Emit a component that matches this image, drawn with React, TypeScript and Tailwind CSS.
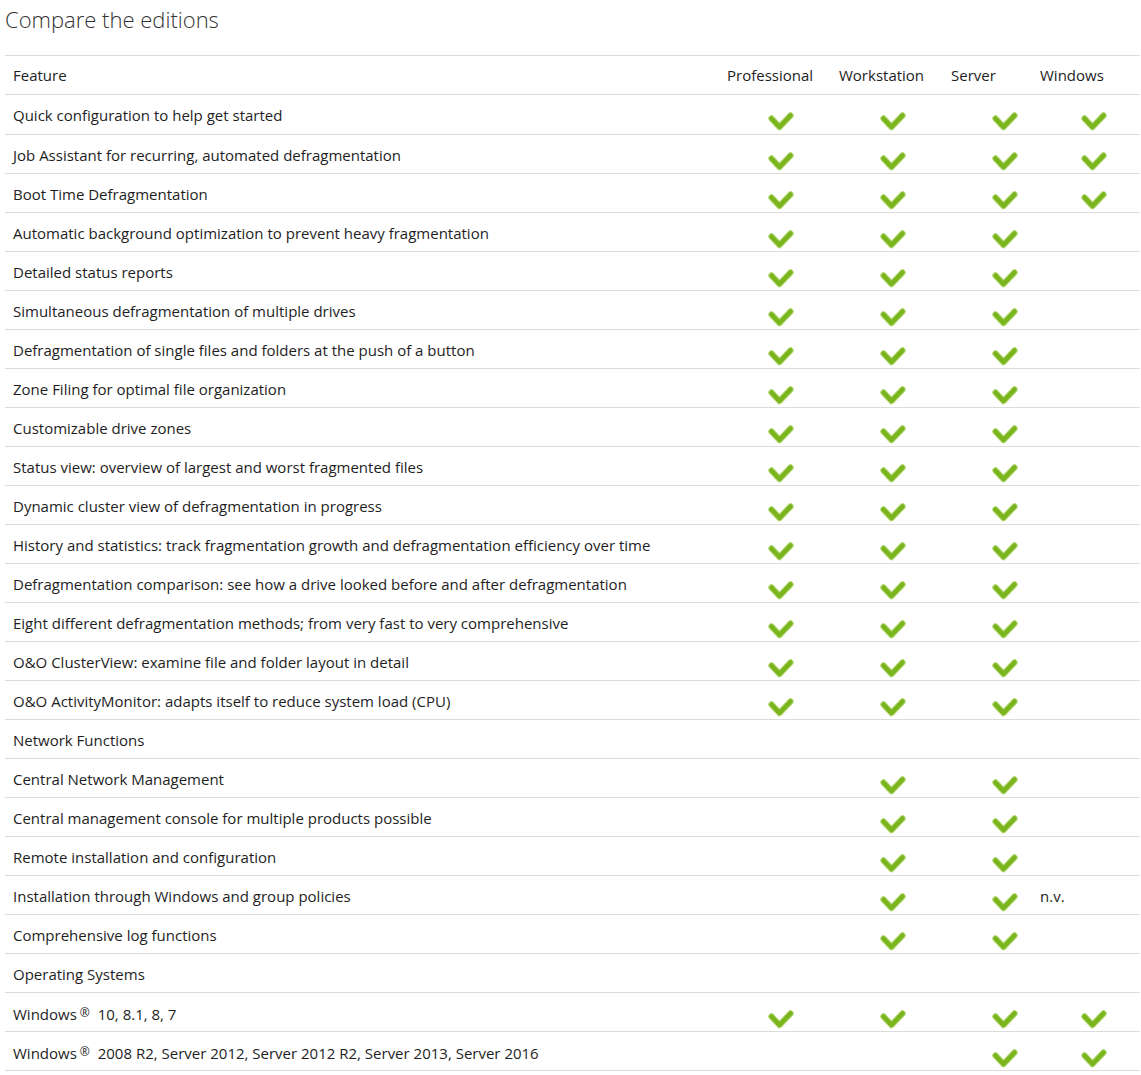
import React from "react";

const Check = () => (
  <svg width="26" height="19" viewBox="0 0 26 19" className="block">
    <path d="M3.5 6.5 L11.5 15 L22.5 3.5" fill="none" stroke="#b7da7c" strokeWidth="6.5" strokeLinecap="round" strokeLinejoin="round" />
    <path d="M3.5 6.5 L11.5 15 L22.5 3.5" fill="none" stroke="#7ab51d" strokeWidth="4.5" strokeLinecap="round" strokeLinejoin="round" />
  </svg>
);

type Cell = boolean | string;
type Row = [string, Cell, Cell, Cell, Cell];

const rows: Row[] = [
  ["Quick configuration to help get started", true, true, true, true],
  ["Job Assistant for recurring, automated defragmentation", true, true, true, true],
  ["Boot Time Defragmentation", true, true, true, true],
  ["Automatic background optimization to prevent heavy fragmentation", true, true, true, false],
  ["Detailed status reports", true, true, true, false],
  ["Simultaneous defragmentation of multiple drives", true, true, true, false],
  ["Defragmentation of single files and folders at the push of a button", true, true, true, false],
  ["Zone Filing for optimal file organization", true, true, true, false],
  ["Customizable drive zones", true, true, true, false],
  ["Status view: overview of largest and worst fragmented files", true, true, true, false],
  ["Dynamic cluster view of defragmentation in progress", true, true, true, false],
  ["History and statistics: track fragmentation growth and defragmentation efficiency over time", true, true, true, false],
  ["Defragmentation comparison: see how a drive looked before and after defragmentation", true, true, true, false],
  ["Eight different defragmentation methods; from very fast to very comprehensive", true, true, true, false],
  ["O&O ClusterView: examine file and folder layout in detail", true, true, true, false],
  ["O&O ActivityMonitor: adapts itself to reduce system load (CPU)", true, true, true, false],
  ["Network Functions", false, false, false, false],
  ["Central Network Management", false, true, true, false],
  ["Central management console for multiple products possible", false, true, true, false],
  ["Remote installation and configuration", false, true, true, false],
  ["Installation through Windows and group policies", false, true, true, "n.v."],
  ["Comprehensive log functions", false, true, true, false],
  ["Operating Systems", false, false, false, false],
  ["Windows® 10, 8.1, 8, 7", true, true, true, true],
  ["Windows® 2008 R2, Server 2012, Server 2012 R2, Server 2013, Server 2016", false, false, true, true],
];

const renderLabel = (s: string) => {
  if (!s.includes("®")) return s;
  const [a, b] = s.split("®");
  return (
    <>
      {a}
      <span className="text-[12px] align-[3px] ml-[3px] mr-[4px]">®</span>
      {b}
    </>
  );
};

export default function App() {
  return (
    <div className="bg-white w-[1141px] min-h-[1075px] text-[#1e1e1e]" style={{ fontFamily: "'Open Sans', 'Noto Sans', sans-serif" }}>
      <h2 className="pl-[5px] pt-[3px] text-[22px] leading-[32px] font-light text-[#333]">Compare the editions</h2>
      <table className="ml-[5px] mt-[20px] w-[1135px] border-collapse table-fixed text-[15px]">
        <colgroup>
          <col className="w-[714px]" />
          <col className="w-[112px]" />
          <col className="w-[112px]" />
          <col className="w-[89px]" />
          <col className="w-[108px]" />
        </colgroup>
        <thead>
          <tr className="h-[39px] border-t border-b border-[#dcdcdc]">
            <th className="text-left font-normal px-2 align-middle">Feature</th>
            <th className="text-left font-normal px-2 align-middle">Professional</th>
            <th className="text-left font-normal px-2 align-middle">Workstation</th>
            <th className="text-left font-normal px-2 align-middle">Server</th>
            <th className="text-left font-normal px-2 align-middle">Windows</th>
          </tr>
        </thead>
        <tbody>
          {rows.map((r, i) => (
            <tr key={i} className={`${i === 0 ? "h-[40px]" : "h-[39px]"} border-b border-[#dcdcdc]`}>
              <td className="px-2 align-top pt-[9px] leading-[22px]">{renderLabel(r[0])}</td>
              {r.slice(1).map((c, j) => (
                <td key={j} className="p-0 align-top">
                  {c === true ? (
                    <div className="pl-[49px] pt-[17px]">
                      <Check />
                    </div>
                  ) : typeof c === "string" ? (
                    <div className="pl-2 pt-[9px] leading-[22px]">{c}</div>
                  ) : null}
                </td>
              ))}
            </tr>
          ))}
        </tbody>
      </table>
    </div>
  );
}
